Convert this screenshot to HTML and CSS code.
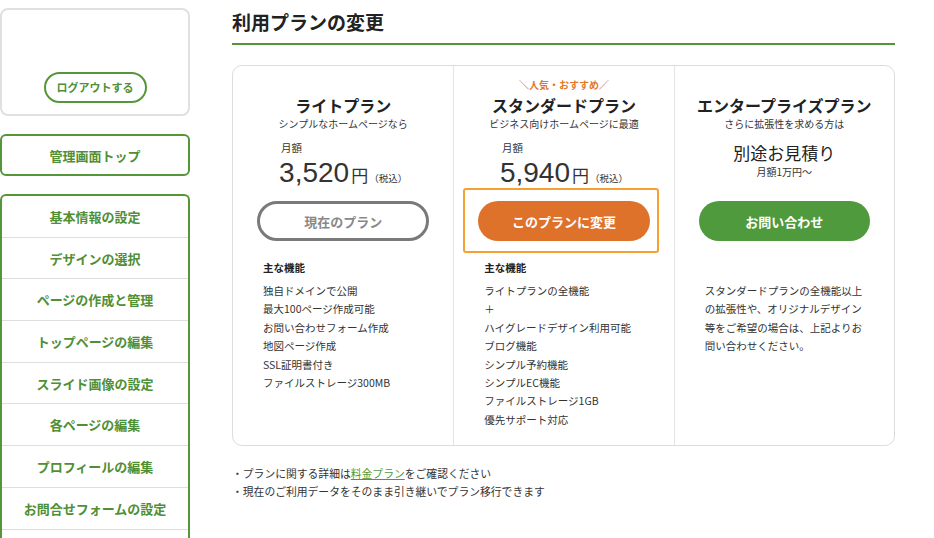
FILE: index.html
```html
<!DOCTYPE html>
<html lang="ja">
<head>
<meta charset="utf-8">
<title>利用プランの変更</title>
<link rel="stylesheet" href="styles.css">
</head>
<body>
<div class="page">
  <aside class="sidebar">
    <div class="account">
      <a class="logout" href="#">ログアウトする</a>
    </div>
    <a class="nav-top" href="#">管理画面トップ</a>
    <nav class="menu">
      <a class="menu-item" href="#">基本情報の設定</a>
      <a class="menu-item" href="#">デザインの選択</a>
      <a class="menu-item" href="#">ページの作成と管理</a>
      <a class="menu-item" href="#">トップページの編集</a>
      <a class="menu-item" href="#">スライド画像の設定</a>
      <a class="menu-item" href="#">各ページの編集</a>
      <a class="menu-item" href="#">プロフィールの編集</a>
      <a class="menu-item" href="#">お問合せフォームの設定</a>
      <div class="menu-item menu-rest"></div>
    </nav>
  </aside>
  <main class="main">
    <h1 class="heading">利用プランの変更</h1>
    <div class="plans">
      <section class="plan">
        <div class="tag"></div>
        <h2 class="plan-title">ライトプラン</h2>
        <p class="plan-sub">シンプルなホームページなら</p>
        <div class="price-area">
          <div class="price">
            <div class="price-label">月額</div>
            <div class="price-line"><span class="num">3,520</span><span class="yen">円</span><span class="tax">（税込）</span></div>
          </div>
        </div>
        <div class="btn-wrap"><span class="btn btn-current">現在のプラン</span></div>
        <div class="features">
          <div class="features-title">主な機能</div>
          <ul class="features-list">
            <li>独自ドメインで公開</li>
            <li>最大100ページ作成可能</li>
            <li>お問い合わせフォーム作成</li>
            <li>地図ページ作成</li>
            <li>SSL証明書付き</li>
            <li>ファイルストレージ300MB</li>
          </ul>
        </div>
      </section>
      <section class="plan">
        <div class="tag">＼人気・おすすめ／</div>
        <h2 class="plan-title">スタンダードプラン</h2>
        <p class="plan-sub">ビジネス向けホームページに最適</p>
        <div class="price-area">
          <div class="price">
            <div class="price-label">月額</div>
            <div class="price-line"><span class="num">5,940</span><span class="yen">円</span><span class="tax">（税込）</span></div>
          </div>
        </div>
        <div class="btn-wrap btn-focus"><a class="btn btn-change" href="#">このプランに変更</a></div>
        <div class="features">
          <div class="features-title">主な機能</div>
          <ul class="features-list">
            <li>ライトプランの全機能</li>
            <li>＋</li>
            <li>ハイグレードデザイン利用可能</li>
            <li>ブログ機能</li>
            <li>シンプル予約機能</li>
            <li>シンプルEC機能</li>
            <li>ファイルストレージ1GB</li>
            <li>優先サポート対応</li>
          </ul>
        </div>
      </section>
      <section class="plan">
        <div class="tag"></div>
        <h2 class="plan-title">エンタープライズプラン</h2>
        <p class="plan-sub">さらに拡張性を求める方は</p>
        <div class="price-area">
          <div class="estimate">別途お見積り</div>
          <div class="estimate-sub">月額1万円〜</div>
        </div>
        <div class="btn-wrap"><a class="btn btn-contact" href="#">お問い合わせ</a></div>
        <p class="desc">スタンダードプランの全機能以上<br>の拡張性や、オリジナルデザイン<br>等をご希望の場合は、上記よりお<br>問い合わせください。</p>
      </section>
    </div>
    <ul class="notes">
      <li>・プランに関する詳細は<a class="note-link" href="#">料金プラン</a>をご確認ください</li>
      <li>・現在のご利用データをそのまま引き継いでプラン移行できます</li>
    </ul>
  </main>
</div>
</body>
</html>
```

FILE: styles.css
```css
* { box-sizing: border-box; }
html, body { margin: 0; padding: 0; background: #fff; }
body {
  font-family: "Noto Sans CJK JP", "Noto Sans", sans-serif;
  color: #333;
  overflow: hidden;
}
a { text-decoration: none; }

.page {
  display: flex;
  gap: 42px;
  padding-top: 8px;
}

/* sidebar */
.sidebar {
  width: 190px;
  flex: none;
  display: flex;
  flex-direction: column;
  gap: 18px;
}
.account {
  height: 108px;
  border: 2px solid #e0e0e0;
  border-radius: 8px;
  display: flex;
  align-items: flex-end;
  justify-content: center;
  padding-bottom: 11px;
}
.logout {
  width: 103px;
  height: 31px;
  border: 2px solid #55963b;
  border-radius: 16px;
  display: flex;
  align-items: center;
  justify-content: center;
  font-size: 11px;
  font-weight: 700;
  color: #4f8f36;
  line-height: 1;
}
.nav-top {
  height: 42px;
  border: 2px solid #55963b;
  border-radius: 6px;
  display: flex;
  align-items: center;
  justify-content: center;
  font-size: 13px;
  font-weight: 700;
  color: #4f8f36;
}
.menu {
  border: 2px solid #55963b;
  border-bottom: none;
  border-radius: 6px 6px 0 0;
  display: flex;
  flex-direction: column;
}
.menu-item {
  height: 41.7px;
  flex: none;
  border-bottom: 1px solid #dedede;
  display: flex;
  align-items: center;
  justify-content: center;
  font-size: 13px;
  font-weight: 700;
  color: #4f8f36;
}
.menu-rest { border-bottom: none; }

/* main */
.main {
  width: 663px;
  flex: none;
}
.heading {
  margin: 0;
  font-size: 19px;
  line-height: 28px;
  font-weight: 700;
  color: #222;
  padding-bottom: 7px;
  border-bottom: 2px solid #55963b;
}
.plans {
  margin-top: 20px;
  border: 1px solid #dcdcdc;
  border-radius: 10px;
  display: grid;
  grid-template-columns: 1fr 1fr 1fr;
}
.plan {
  padding: 12px 0 16px;
  text-align: center;
}
.plan + .plan { border-left: 1px solid #e4e4e4; }

.tag {
  height: 14px;
  font-size: 10px;
  line-height: 14px;
  font-weight: 700;
  color: #e0782a;
}
.plan-title {
  margin: 2px 0 0;
  font-size: 16px;
  line-height: 22px;
  font-weight: 700;
  color: #222;
}
.plan-sub {
  margin: 1px 0 0;
  font-size: 10px;
  line-height: 14px;
  color: #333;
}
.price-area {
  margin-top: 10px;
  height: 47px;
}
.price {
  display: inline-block;
  text-align: left;
}
.price-label {
  font-size: 10.5px;
  line-height: 14px;
  padding-left: 2px;
  color: #333;
}
.price-line {
  line-height: 35px;
  white-space: nowrap;
  color: #333;
}
.num {
  font-family: "Liberation Sans", "Noto Sans", sans-serif;
  font-size: 28px;
}
.yen {
  font-size: 17px;
  margin-left: 2px;
}
.tax {
  font-size: 9.5px;
  margin-left: 1px;
}
.estimate {
  font-size: 17px;
  line-height: 24px;
  color: #222;
}
.estimate-sub {
  font-size: 10px;
  line-height: 14px;
  color: #333;
}

.btn-wrap {
  margin: 13px 24px 0;
  position: relative;
}
.btn {
  display: flex;
  align-items: center;
  justify-content: center;
  height: 40px;
  border-radius: 20px;
  font-size: 13px;
  font-weight: 700;
  color: #fff;
}
.btn-current {
  border: 3px solid #7a7a7a;
  color: #888;
  background: #fff;
}
.btn-change { background: #df722b; }
.btn-contact { background: #4f9a3c; }
.btn-focus::after {
  content: "";
  position: absolute;
  top: -13px;
  left: -15px;
  right: -9px;
  bottom: -12px;
  border: 2px solid #f5a033;
  border-radius: 3px;
  pointer-events: none;
}

.features {
  margin-top: 18px;
  padding: 0 30px;
  text-align: left;
}
.features-title {
  font-size: 10.5px;
  line-height: 18px;
  font-weight: 700;
  color: #222;
}
.features-list {
  list-style: none;
  margin: 5px 0 0;
  padding: 0;
}
.features-list li {
  font-size: 10.5px;
  line-height: 18.4px;
  color: #333;
}
.desc {
  margin: 41px 0 0;
  padding: 0 30px;
  text-align: left;
  font-size: 10.5px;
  line-height: 18.4px;
  color: #333;
  white-space: nowrap;
}

.notes {
  list-style: none;
  margin: 18px 0 0;
  padding: 0;
}
.notes li {
  font-size: 10.8px;
  line-height: 18px;
  color: #333;
}
.note-link {
  color: #4f9a3c;
  text-decoration: underline;
}
```
